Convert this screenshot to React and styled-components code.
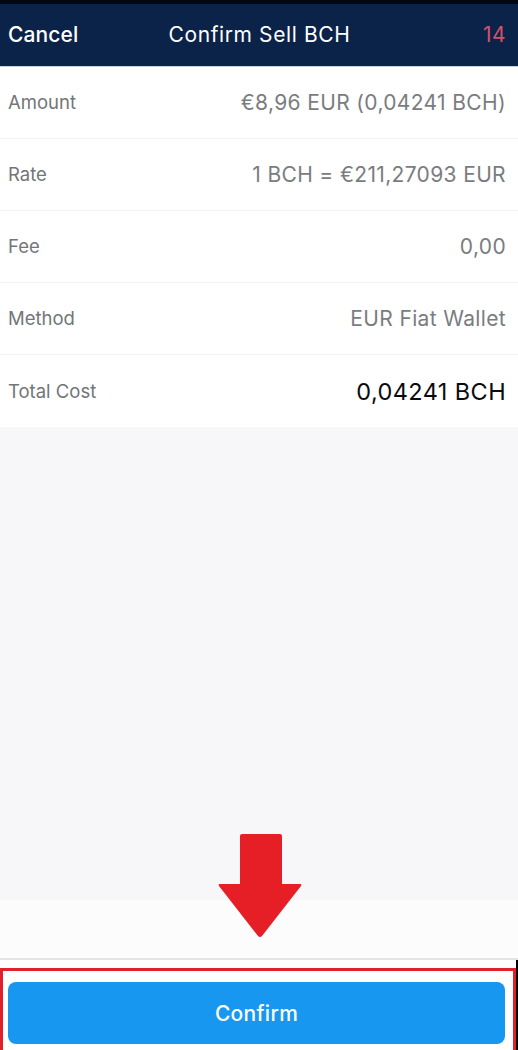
import React from 'react';
import styled, { createGlobalStyle } from 'styled-components';

const GlobalStyle = createGlobalStyle`
    html, body {
        margin: 0;
        padding: 0;
        background: #000;
    }
    body {
        font-family: 'Inter', 'Open Sans', sans-serif;
        -webkit-font-smoothing: antialiased;
    }
`;

const rows = [
    { label: 'Amount', value: '€8,96 EUR (0,04241 BCH)' },
    { label: 'Rate', value: '1 BCH = €211,27093 EUR' },
    { label: 'Fee', value: '0,00' },
    { label: 'Method', value: 'EUR Fiat Wallet' },
    { label: 'Total Cost', value: '0,04241 BCH', strong: true },
];

const App = () => {
    return (
        <>
            <GlobalStyle />
            <Screen>
                <Header>
                    <span className="cancel">Cancel</span>
                    <span className="title">Confirm Sell BCH</span>
                    <span className="timer">14</span>
                </Header>
                <List>
                    {rows.map((r, i) => (
                        <Row key={r.label} $last={i === rows.length - 1}>
                            <Label>{r.label}</Label>
                            <Value $strong={r.strong}>{r.value}</Value>
                        </Row>
                    ))}
                </List>
                <Filler>
                    <div className="upper" />
                    <div className="lower" />
                    <Arrow viewBox="0 0 84 104" width="84" height="104">
                        <path
                            d="M22 2 Q22 0 24 0 H62 Q64 0 64 2 V50 H82 Q84 50 83 52 L44 102 Q42 104 40 102 L1 52 Q0 50 2 50 H22 Z"
                            fill="#e61e26"
                        />
                    </Arrow>
                </Filler>
                <Footer>
                    <Highlight>
                        <ConfirmButton>Confirm</ConfirmButton>
                    </Highlight>
                </Footer>
            </Screen>
        </>
    );
};

const Screen = styled.div`
    width: 518px;
    height: 1050px;
    display: flex;
    flex-direction: column;
    overflow: hidden;
    background: #fff;
    border-top: 4px solid #03070f;
    box-sizing: border-box;
`;

const Header = styled.header`
    height: 62px;
    flex: none;
    background: #0b2249;
    display: flex;
    align-items: center;
    justify-content: space-between;
    padding: 0 12px 0 8px;
    position: relative;
    border-bottom: 1px solid #c9d3e0;
    span {
        font-size: 21px;
        line-height: 1;
        color: #fff;
        margin-top: -1px;
    }
    .cancel {
        font-weight: 500;
        letter-spacing: 0.1px;
    }
    .title {
        position: absolute;
        left: 0;
        right: 0;
        text-align: center;
        pointer-events: none;
        padding-left: 1px;
        letter-spacing: 0.6px;
    }
    .timer {
        color: #d4506a;
        letter-spacing: 0.5px;
    }
`;

const List = styled.div`
    flex: none;
    background: #fff;
`;

const Row = styled.div`
    height: 72px;
    box-sizing: border-box;
    display: flex;
    align-items: center;
    justify-content: space-between;
    padding: 0 12px 0 8px;
    border-bottom: ${p => (p.$last ? 'none' : '1px solid #eff0f2')};
`;

const Label = styled.span`
    font-size: 18.5px;
    color: #737578;
    margin-top: -1px;
`;

const Value = styled.span`
    font-size: ${p => (p.$strong ? '23.5px' : '21px')};
    color: ${p => (p.$strong ? '#0b0b0d' : '#7a7c80')};
    letter-spacing: ${p => (p.$strong ? '0.4px' : '0.35px')};
`;

const Filler = styled.div`
    flex: 1;
    display: flex;
    flex-direction: column;
    position: relative;
    .upper {
        flex: 1;
        background: #f7f7f9;
    }
    .lower {
        height: 58px;
        background: #fcfcfd;
        border-bottom: 2px solid #e4e4e6;
    }
`;

const Arrow = styled.svg`
    position: absolute;
    left: 218px;
    bottom: 22px;
`;

const Footer = styled.div`
    flex: none;
    height: 90px;
    background: #fff;
    padding-top: 8px;
    box-sizing: border-box;
    border-right: 2px solid #000;
`;

const Highlight = styled.div`
    height: 85px;
    box-sizing: border-box;
    border: 3px solid #e1202b;
    padding: 11px 8px 0 5px;
`;

const ConfirmButton = styled.button`
    width: 100%;
    height: 62px;
    border: none;
    border-radius: 8px;
    background: #1797f0;
    color: #fff;
    font-family: 'Inter', 'Open Sans', sans-serif;
    font-size: 21px;
    font-weight: 500;
    letter-spacing: 0.3px;
    cursor: pointer;
`;

export default App;
